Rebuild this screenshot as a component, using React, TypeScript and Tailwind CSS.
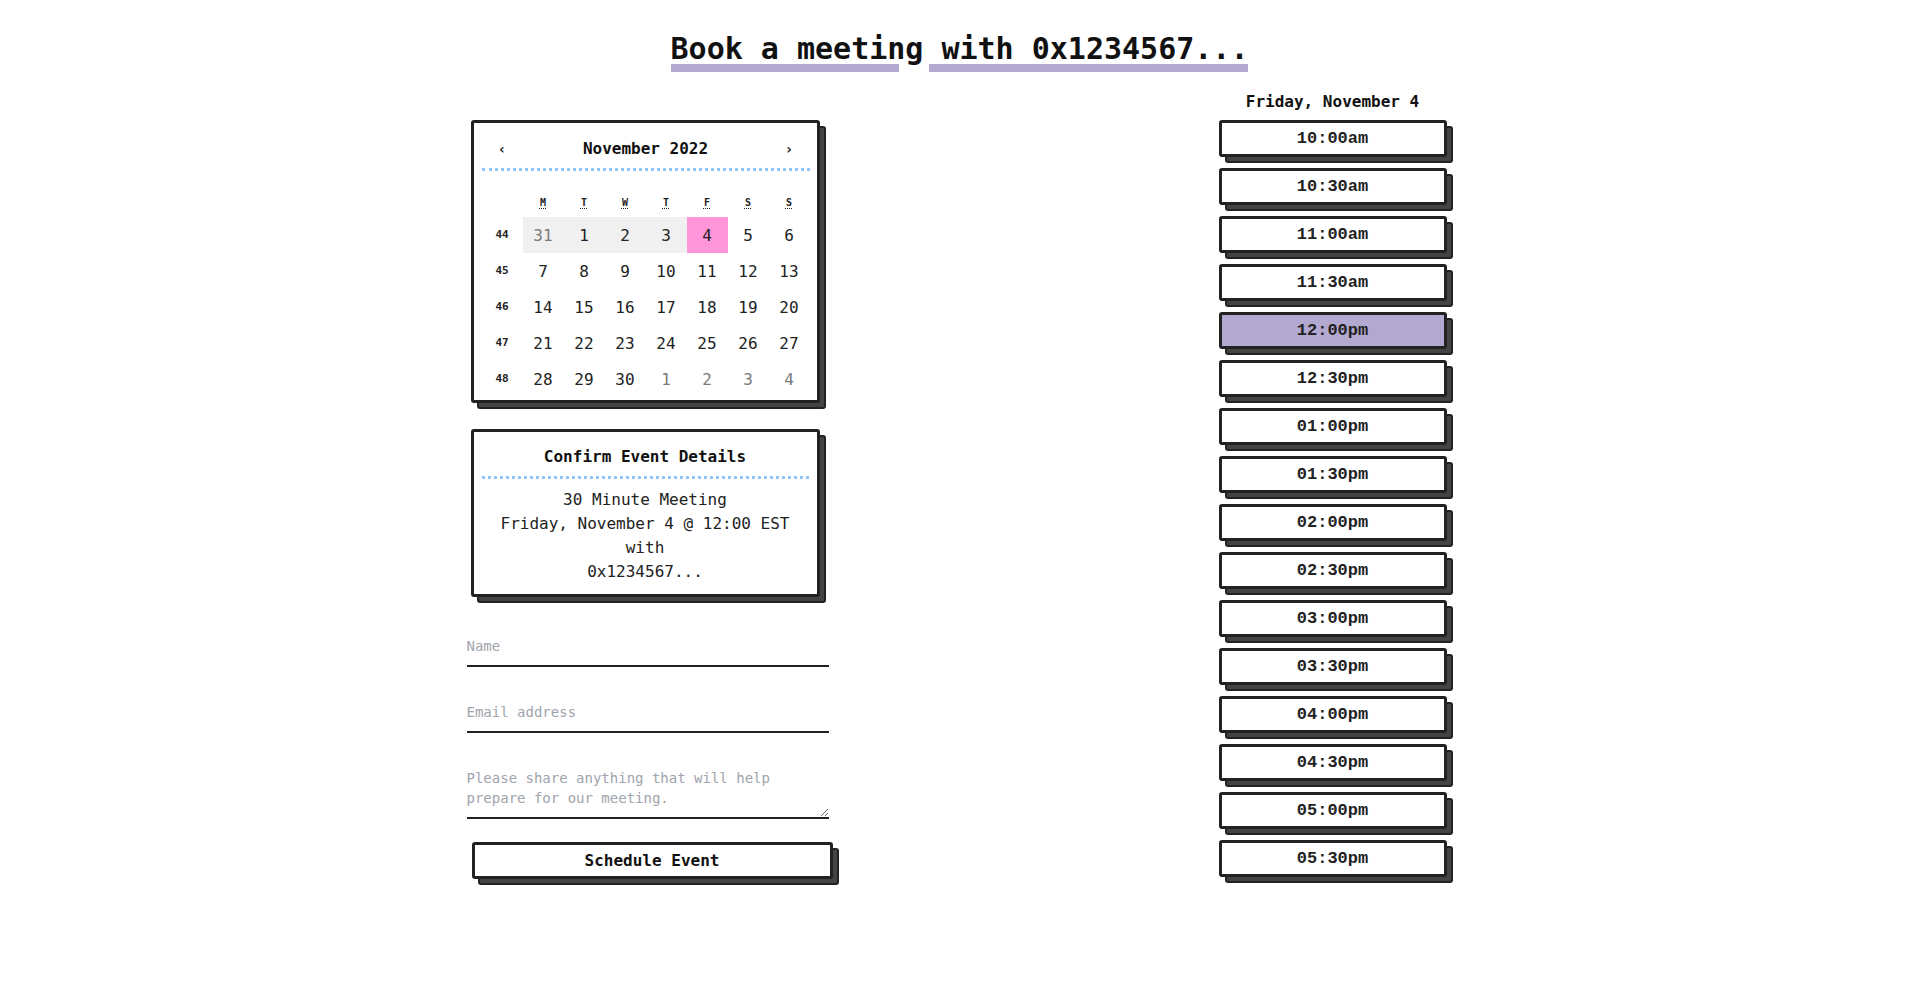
import React from "react";

const weeks: { wk: number; days: { d: number; other?: boolean }[] }[] = [
  { wk: 44, days: [{ d: 31, other: true }, { d: 1 }, { d: 2 }, { d: 3 }, { d: 4 }, { d: 5 }, { d: 6 }] },
  { wk: 45, days: [7, 8, 9, 10, 11, 12, 13].map((d) => ({ d })) },
  { wk: 46, days: [14, 15, 16, 17, 18, 19, 20].map((d) => ({ d })) },
  { wk: 47, days: [21, 22, 23, 24, 25, 26, 27].map((d) => ({ d })) },
  {
    wk: 48,
    days: [{ d: 28 }, { d: 29 }, { d: 30 }, { d: 1, other: true }, { d: 2, other: true }, { d: 3, other: true }, { d: 4, other: true }],
  },
];

const slots = [
  "10:00am",
  "10:30am",
  "11:00am",
  "11:30am",
  "12:00pm",
  "12:30pm",
  "01:00pm",
  "01:30pm",
  "02:00pm",
  "02:30pm",
  "03:00pm",
  "03:30pm",
  "04:00pm",
  "04:30pm",
  "05:00pm",
  "05:30pm",
];

const dayLetters = ["M", "T", "W", "T", "F", "S", "S"];

function Calendar() {
  return (
    <div className="ml-1 w-[349px] rounded-[3px] border-[3px] border-[#222] bg-white pl-2 pr-[7px] pb-[3px] shadow-[6px_6px_0_-2px_#444,6px_6px_0_0_#222]">
      <div className="flex items-center border-b-[3px] border-dotted border-[#93c5fd] pt-[16px] pb-[9px]">
        <span className="w-[41px] text-center text-[14px] leading-5 font-bold">‹</span>
        <span className="flex-1 text-center text-base leading-5 font-bold text-[#111]">November 2022</span>
        <span className="w-[41px] text-center text-[14px] leading-5 font-bold">›</span>
      </div>
      <div className="mt-[21px] grid h-5 grid-cols-[repeat(8,41px)] items-center">
        <span />
        {dayLetters.map((l, i) => (
          <span key={i} className="text-center text-[10px] font-bold">
            <span className="underline decoration-dotted underline-offset-2">{l}</span>
          </span>
        ))}
      </div>
      <div className="mt-[5px] flex flex-col">
        {weeks.map((w, wi) => (
          <div key={w.wk} className="grid grid-cols-[repeat(8,41px)]">
            <span className="flex h-9 items-center justify-center pt-px text-[11px] font-bold">{w.wk}</span>
            {w.days.map((day, di) => {
              let bg = "";
              if (wi === 0 && di < 4) bg = "bg-[#f0f0f0]";
              if (wi === 0 && di === 4) bg = "bg-[#ff96d9]";
              return (
                <span
                  key={di}
                  className={`flex h-9 items-center justify-center pt-px text-base ${bg} ${day.other ? "text-[#7a7a7a]" : "text-[#222]"}`}
                >
                  {day.d}
                </span>
              );
            })}
          </div>
        ))}
      </div>
    </div>
  );
}

function Confirm() {
  return (
    <div className="ml-1 mt-[26px] w-[349px] rounded-[3px] border-[3px] border-[#222] bg-white px-2 pb-[10px] shadow-[6px_6px_0_-2px_#444,6px_6px_0_0_#222]">
      <div className="border-b-[3px] border-dotted border-[#93c5fd] pt-[15px] pb-[9px] text-center text-base leading-5 font-bold text-[#111]">
        Confirm Event Details
      </div>
      <div className="mt-2 pt-px text-center text-base leading-6 text-[#222]">
        <div>30 Minute Meeting</div>
        <div>Friday, November 4 @ 12:00 EST</div>
        <div>with</div>
        <div>0x1234567...</div>
      </div>
    </div>
  );
}

export default function App() {
  return (
    <div className="min-h-screen bg-white text-[#222] font-['DejaVu_Sans_Mono',monospace]">
      <div className="flex justify-center pt-[34px]">
        <div className="inline-flex flex-col">
          <h1 className="whitespace-pre text-[30px] leading-[30px] font-bold text-[#111]">Book a meeting with 0x1234567...</h1>
          <div className="flex gap-[30px]">
            <div className="h-2 w-[228px] bg-[#b3a8cf]" />
            <div className="h-2 flex-1 bg-[#b3a8cf]" />
          </div>
        </div>
      </div>

      <div className="mx-auto mt-[20px] flex w-[986px] items-start justify-between">
        <div className="mt-[28px] flex w-[362px] flex-col">
          <Calendar />
          <Confirm />
          <input
            className="mt-[28px] block h-[42px] w-full border-b-2 border-[#222] bg-transparent pt-px text-sm text-[#222] outline-none placeholder:text-[#a0a4ac]"
            placeholder="Name"
          />
          <input
            className="mt-6 block h-[42px] w-full border-b-2 border-[#222] bg-transparent pt-px text-sm text-[#222] outline-none placeholder:text-[#a0a4ac]"
            placeholder="Email address"
          />
          <textarea
            className="mt-6 block h-[62px] w-full resize-y border-b-2 border-[#222] bg-transparent pt-[11px] pb-[9px] text-sm leading-5 text-[#222] outline-none placeholder:text-[#a0a4ac]"
            placeholder="Please share anything that will help prepare for our meeting."
          />
          <button className="mt-[23px] ml-[5px] h-[37px] w-[361px] rounded-[3px] border-[3px] border-[#222] bg-white text-base font-bold text-[#111] shadow-[6px_6px_0_-2px_#444,6px_6px_0_0_#222]">
            Schedule Event
          </button>
        </div>

        <div className="w-[234px]">
          <div className="flex w-[228px] flex-col">
            <div className="h-5 text-center text-base leading-5 font-bold text-[#111]">Friday, November 4</div>
            <div className="mt-2 flex flex-col gap-[11px]">
              {slots.map((s) => (
                <button
                  key={s}
                  className={`h-[37px] w-full rounded-[3px] border-[3px] border-[#222] font-['Liberation_Mono',monospace] text-[17px] font-bold text-[#222] shadow-[6px_6px_0_-2px_#444,6px_6px_0_0_#222] ${
                    s === "12:00pm" ? "bg-[#b3a8cf]" : "bg-white"
                  }`}
                >
                  {s}
                </button>
              ))}
            </div>
          </div>
        </div>
      </div>
    </div>
  );
}
